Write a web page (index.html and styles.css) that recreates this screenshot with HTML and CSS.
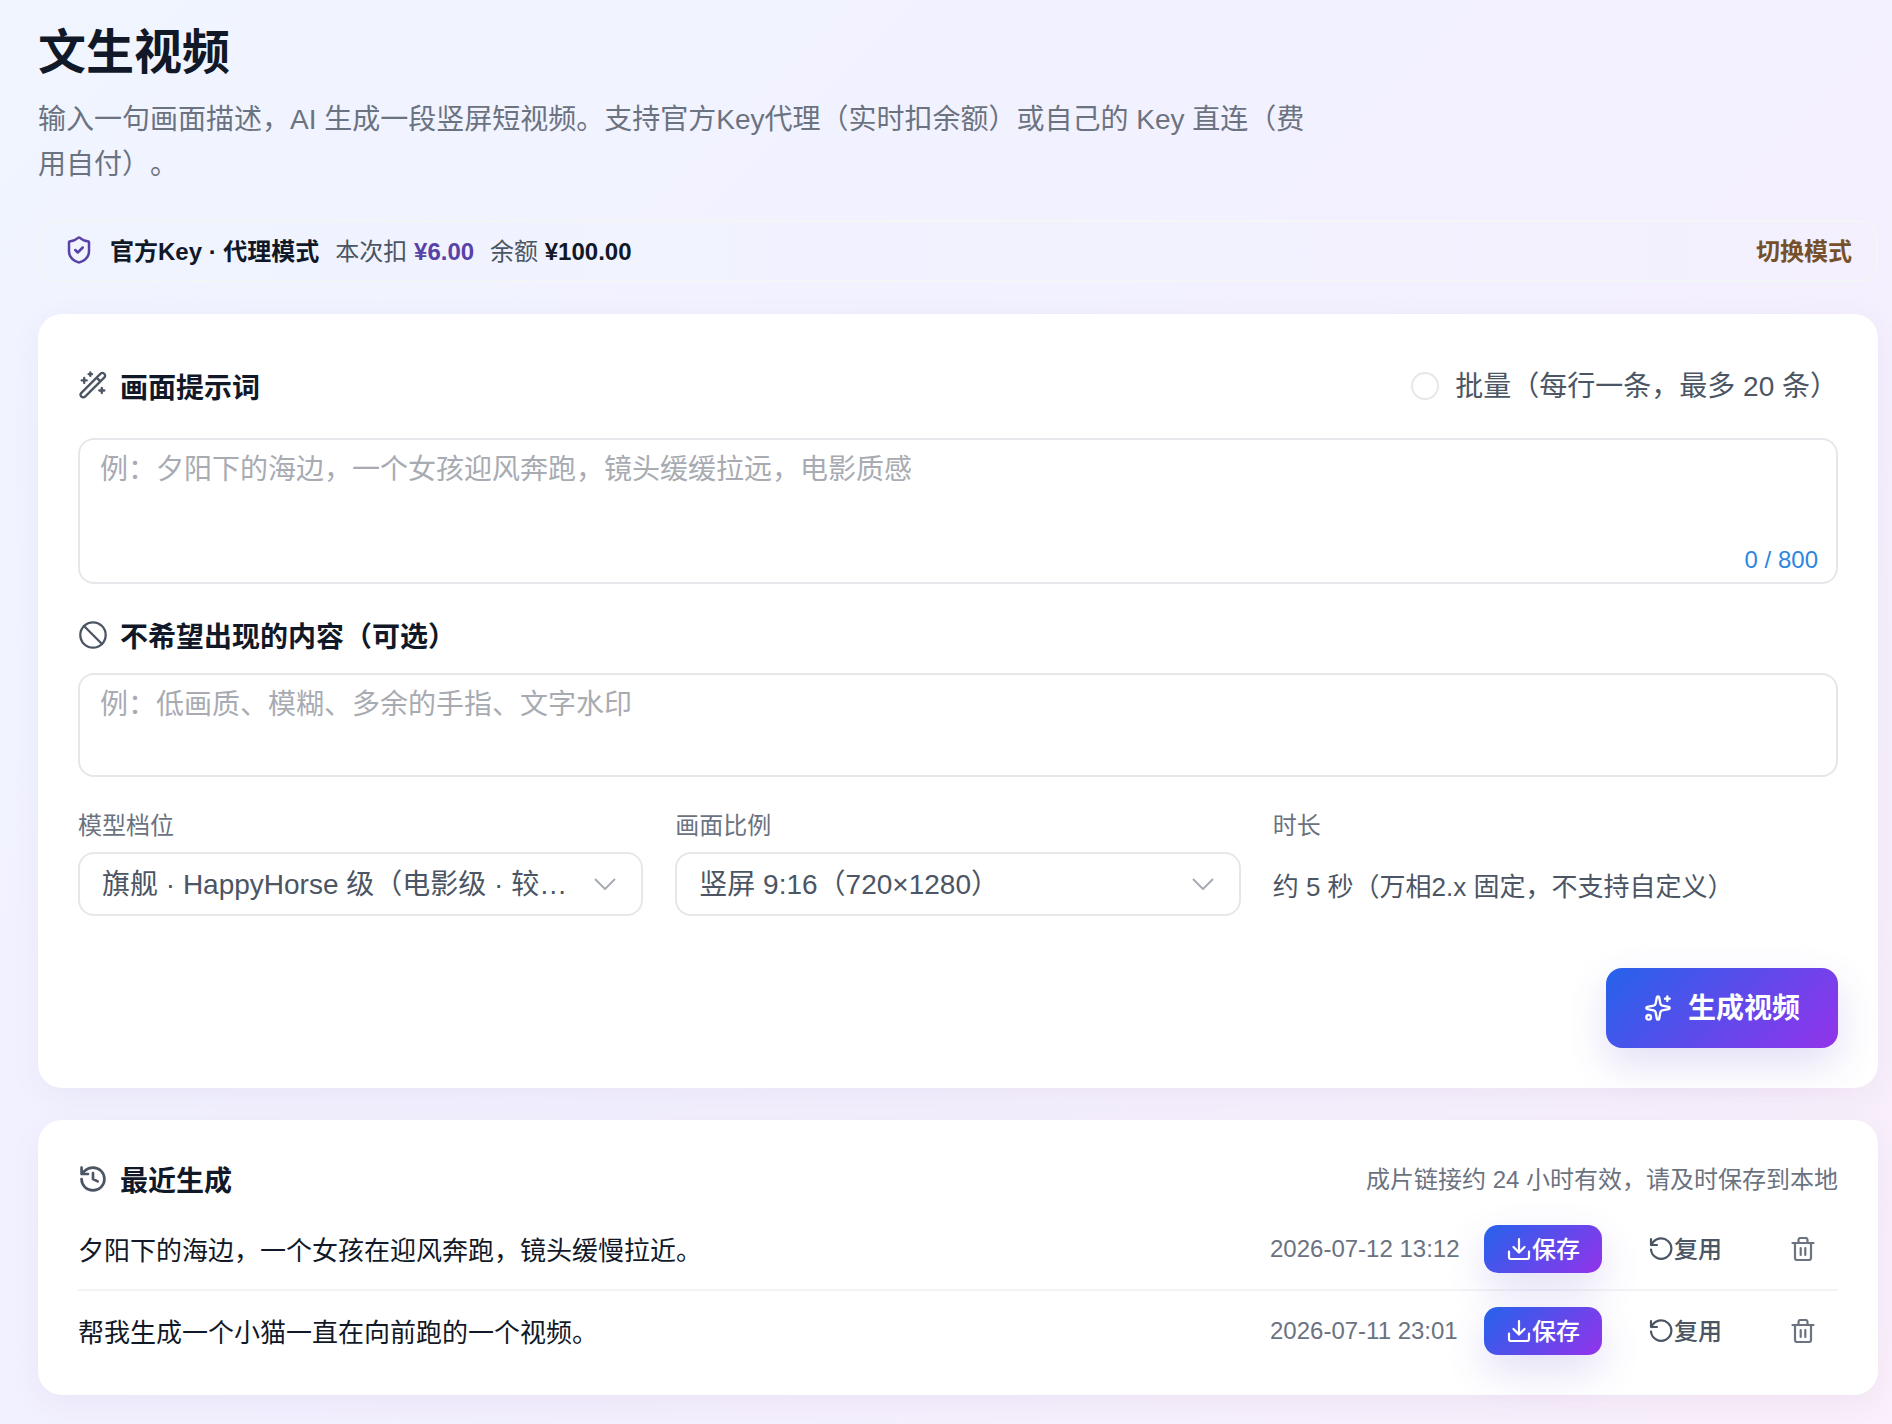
FILE: index.html
```html
<!DOCTYPE html>
<html lang="zh-CN">
<head>
<meta charset="utf-8">
<title>文生视频</title>
<link rel="stylesheet" href="styles.css">
</head>
<body>
<svg class="sprite" aria-hidden="true">
  <symbol id="shield" viewBox="0 0 24 24"><path d="M20 13c0 5-3.5 7.5-7.66 8.95a1 1 0 0 1-.67-.01C7.5 20.5 4 18 4 13V6a1 1 0 0 1 1-1c2 0 4.5-1.2 6.24-2.72a1.17 1.17 0 0 1 1.52 0C14.51 3.81 17 5 19 5a1 1 0 0 1 1 1z"/><path d="m9 12 2 2 4-4"/></symbol>
  <symbol id="wand" viewBox="0 0 28 28"><path d="M2.4 21.9 21.6 2.6a2.7 2.7 0 0 1 3.8 3.8L6.1 25.6a2.6 2.6 0 0 1-3.7-3.7zM17.6 6.6l3.800 3.800M11.300 1.500v3.400M9.600 3.200h3.400M5.200 6.900v5M2.700 9.400h5M22.800 17v5M20.300 19.500h5"/></symbol>
  <symbol id="ban" viewBox="0 0 28 28"><circle cx="14" cy="14" r="12.700"/><path d="m5 5 18 18"/></symbol>
  <symbol id="sparkles" viewBox="0 0 24 24"><path d="M11.017 2.814a1 1 0 0 1 1.966 0l1.051 5.558a2 2 0 0 0 1.594 1.594l5.558 1.051a1 1 0 0 1 0 1.966l-5.558 1.051a2 2 0 0 0-1.594 1.594l-1.051 5.558a1 1 0 0 1-1.966 0l-1.051-5.558a2 2 0 0 0-1.594-1.594l-5.558-1.051a1 1 0 0 1 0-1.966l5.558-1.051a2 2 0 0 0 1.594-1.594zM20 2v4M22 4h-4"/><circle cx="4" cy="20" r="2"/></symbol>
  <symbol id="history" viewBox="0 0 24 24"><path d="M2.200 12a9.800 9.800 0 1 0 9.800-9.800 10.500 10.500 0 0 0-7.300 3L2.200 7.700M2.200 2.200v5.500h5.500M12 7v5l4 2"/></symbol>
  <symbol id="download" viewBox="0 0 24 24"><path d="M12 2v13M6.500 10l5.500 5.500 5.500-5.500M2 14.500V20a2 2 0 0 0 2 2h16a2 2 0 0 0 2-2v-5.500"/></symbol>
  <symbol id="undo" viewBox="0 0 24 24"><path d="M2 2v6h6M2.600 8A10.200 10.200 0 1 1 2 12.500"/></symbol>
  <symbol id="trash" viewBox="0 0 24 24"><path d="M1.500 6h21M4 6v15a2 2 0 0 0 2 2h12a2 2 0 0 0 2-2V6M7.500 6V3a2 2 0 0 1 2-2h5a2 2 0 0 1 2 2v3M9.700 11v7M14.300 11v7"/></symbol>
  <symbol id="chevron" viewBox="0 0 28 28"><path d="m4.500 9.500 9.500 9.500 9.500-9.500"/></symbol>
</svg>
<main class="page">
  <h1 class="title">文生视频</h1>
  <p class="subtitle">输入一句画面描述，AI 生成一段竖屏短视频。支持官方Key代理（实时扣余额）或自己的 Key 直连（费用自付）。</p>

  <section class="mode">
    <svg class="icon mode-icon"><use href="#shield"/></svg>
    <strong>官方Key · 代理模式</strong>
    <span>本次扣 <b class="price">¥6.00</b></span>
    <span>余额 <b>¥100.00</b></span>
    <a class="switch">切换模式</a>
  </section>

  <section class="card form">
    <div class="card-head">
      <h2 class="heading"><svg class="icon"><use href="#wand"/></svg>画面提示词</h2>
      <label class="batch"><span class="circle"></span><span class="batch-text">批量（每行一条，最多 20 条）</span></label>
    </div>
    <div class="field prompt"><span>例：夕阳下的海边，一个女孩迎风奔跑，镜头缓缓拉远，电影质感</span><span class="count">0 / 800</span></div>
    <h2 class="heading second"><svg class="icon"><use href="#ban"/></svg>不希望出现的内容（可选）</h2>
    <div class="field negative">例：低画质、模糊、多余的手指、文字水印</div>
    <div class="options">
      <div class="option"><span class="label">模型档位</span>
        <div class="select"><span class="value">旗舰 · HappyHorse 级（电影级 · 较…</span><svg class="icon chevron"><use href="#chevron"/></svg></div></div>
      <div class="option"><span class="label">画面比例</span>
        <div class="select"><span class="value">竖屏 9:16（720×1280）</span><svg class="icon chevron"><use href="#chevron"/></svg></div></div>
      <div class="option"><span class="label">时长</span>
        <div class="duration">约 5 秒（万相2.x 固定，不支持自定义）</div></div>
    </div>
    <button class="primary generate"><svg class="icon"><use href="#sparkles"/></svg><span>生成视频</span></button>
  </section>

  <section class="card recent">
    <div class="card-head">
      <h2 class="heading"><svg class="icon"><use href="#history"/></svg>最近生成</h2>
      <span class="note">成片链接约 24 小时有效，请及时保存到本地</span>
    </div>
    <div class="row">
      <span class="row-text">夕阳下的海边，一个女孩在迎风奔跑，镜头缓慢拉近。</span>
      <time>2026-07-12 13:12</time>
      <button class="primary save"><svg class="icon"><use href="#download"/></svg><span>保存</span></button>
      <button class="plain reuse"><svg class="icon"><use href="#undo"/></svg><span>复用</span></button>
      <button class="plain delete"><svg class="icon"><use href="#trash"/></svg></button>
    </div>
    <div class="row">
      <span class="row-text">帮我生成一个小猫一直在向前跑的一个视频。</span>
      <time>2026-07-11 23:01</time>
      <button class="primary save"><svg class="icon"><use href="#download"/></svg><span>保存</span></button>
      <button class="plain reuse"><svg class="icon"><use href="#undo"/></svg><span>复用</span></button>
      <button class="plain delete"><svg class="icon"><use href="#trash"/></svg></button>
    </div>
  </section>
</main>
</body>
</html>
```
FILE: styles.css
```css
* { box-sizing: border-box; margin: 0; }
body {
  min-height: 1424px;
  background: linear-gradient(135deg, #f0f5ff 0%, #f3f0ff 55%, #faeffa 100%);
  color: #111827;
  font-family: "Liberation Sans", "Noto Sans CJK SC", sans-serif;
  font-size: 28px;
  text-spacing-trim: space-all;
}
.sprite { position: absolute; width: 0; height: 0; }
.page { padding: 17px 14px 0 38px; }
.icon {
  width: 28px; height: 28px; flex: none;
  fill: none; stroke: currentColor; stroke-width: 2;
  stroke-linecap: round; stroke-linejoin: round; overflow: visible;
}
.title { font-size: 48px; line-height: 72px; }
.subtitle { max-width: 1280px; margin-top: 8px; color: #6b7280; line-height: 45px; }
.mode {
  display: flex; align-items: center; gap: 16px;
  height: 62px; margin-top: 33px; padding: 0 24px 3px;
  border: 2px solid #f3f5f6; border-radius: 20px;
  background: linear-gradient(90deg, #eff4ff, #f4f0fe);
  font-size: 24px; color: #4b5563;
}
.mode strong, .mode b { color: #111827; }
.mode-icon { width: 30px; height: 30px; color: #5842a6; }
.mode .price { color: #5842a6; }
.switch { margin-left: auto; font-weight: 700; color: #76502a; }
.card {
  padding: 40px; border-radius: 24px; background: #fff;
  box-shadow: 0 8px 32px rgba(80, 50, 120, .06);
}
.form { height: 774px; margin-top: 32px; }
.recent { height: 275px; margin-top: 32px; padding-top: 30px; }
.card-head { display: flex; justify-content: space-between; align-items: center; height: 64px; }
.recent .card-head { height: 59px; }
.heading {
  display: flex; align-items: center; gap: 13px;
  padding: 5px 0 0 1px; font-size: 28px; line-height: 40px;
}
.heading .icon { margin-bottom: 7px; color: #4b5563; stroke-width: 2.3; }
.batch { display: flex; align-items: center; gap: 16px; color: #4b5563; }
.batch-text { padding-bottom: 4px; }
.circle { width: 28px; height: 28px; border: 2px solid #e5e7eb; border-radius: 50%; }
.field {
  position: relative; padding: 9px 20px; border: 2px solid #e5e7eb;
  border-radius: 16px; color: #a8abb2; line-height: 42px;
}
.prompt { height: 146px; margin-top: 20px; }
.count { position: absolute; right: 18px; bottom: 7px; font-size: 24px; line-height: 30px; color: #2e86de; }
.second { margin-top: 29px; }
.negative { height: 104px; margin-top: 15px; }
.options { display: grid; grid-template-columns: repeat(3, 1fr); gap: 32px; margin-top: 31px; }
.option { min-width: 0; }
.label { display: block; color: #6b7280; font-size: 24px; line-height: 36px; }
.select {
  display: flex; align-items: center; justify-content: space-between; gap: 20px;
  height: 64px; margin-top: 8px; padding: 0 22px;
  border: 2px solid #e5e7eb; border-radius: 16px; color: #4b5563;
}
.value { padding-bottom: 5px; white-space: nowrap; }
.chevron { color: #a8abb2; }
.duration { margin-top: 9px; color: #4b5563; font-size: 26px; line-height: 68px; }
button { display: flex; align-items: center; border: 0; font-family: inherit; white-space: nowrap; }
button span { padding-bottom: 4px; }
.primary {
  background: linear-gradient(135deg, #2563eb, #9333ea); color: #fff;
  box-shadow: 0 16px 40px rgba(79, 50, 190, .16);
}
.generate {
  width: 232px; height: 80px; margin: 47px 0 0 auto; padding: 0 38px; gap: 16px;
  border-radius: 16px; font-size: 28px; font-weight: 600;
}
.generate span { padding-bottom: 5px; }
.note { padding-bottom: 4px; color: #6b7280; font-size: 24px; }
.row { display: flex; align-items: center; height: 80px; }
.row:not(:last-child) { height: 82px; border-bottom: 2px solid #f3f4f6; }
.row-text { flex: 1; padding-bottom: 2px; font-size: 26px; }
time { width: 190px; margin-right: 24px; color: #6b7280; font-size: 24px; white-space: nowrap; }
.row .icon { width: 24px; height: 24px; stroke-width: 2.2; }
.save { width: 118px; height: 48px; padding: 0 23px; gap: 1px; border-radius: 14px; font-size: 24px; font-weight: 500; }
.plain { padding: 0; background: none; color: #4b5563; font-size: 24px; font-weight: 500; }
.reuse { margin-left: 47px; gap: 1px; }
.delete { margin: 0 23px 0 69px; color: #6b7280; }
```
